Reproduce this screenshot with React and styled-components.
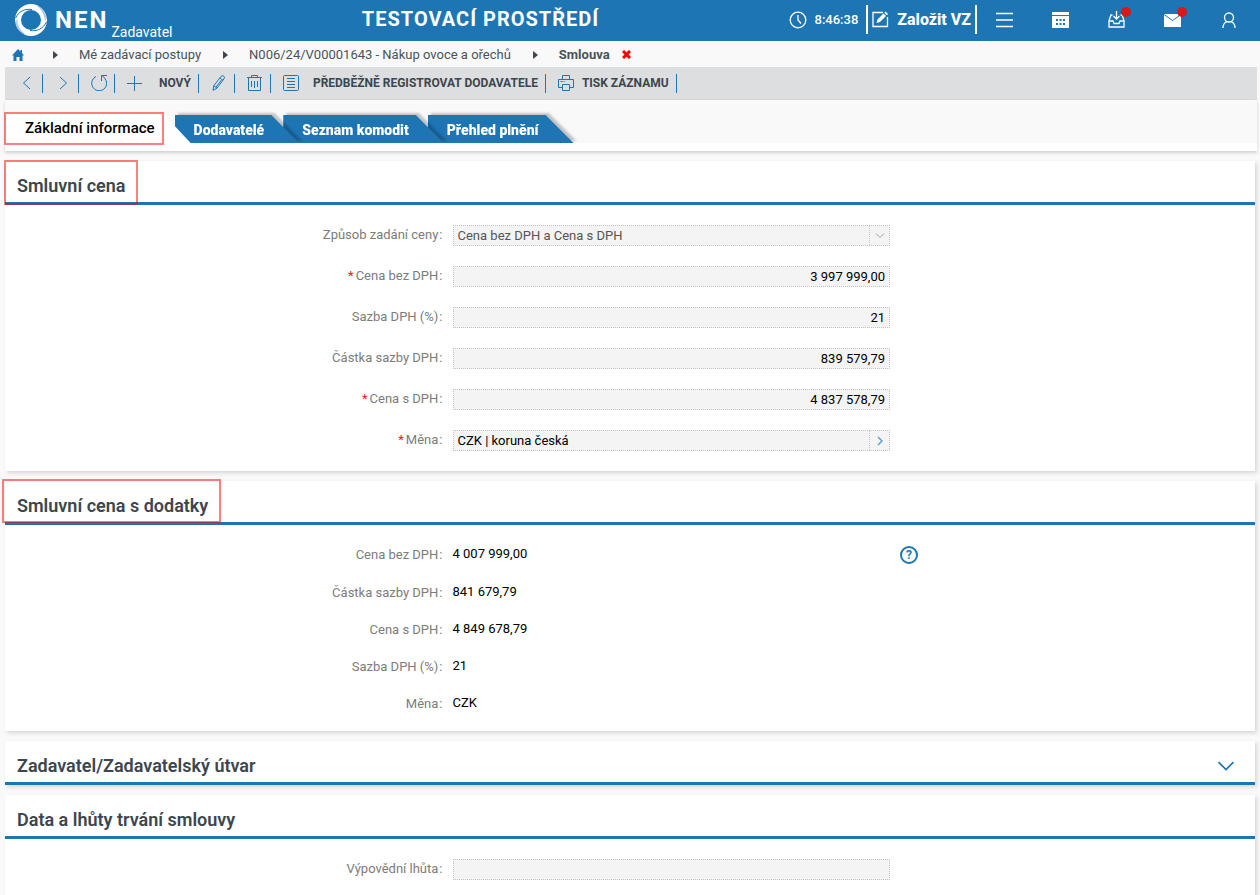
import styled, { createGlobalStyle } from 'styled-components';

const BLUE = '#1d75b4';

const GlobalStyle = createGlobalStyle`
  * {
    box-sizing: border-box;
  }

  body {
    margin: 0;
    background: #f9f9f9;
    color: #3c464e;
    font-family: Roboto, "Liberation Sans", sans-serif;
    font-size: 13px;
    line-height: 16px;
  }

  button, input, select {
    margin: 0;
    padding: 0;
    border: 0;
    border-radius: 0;
    background: none;
    color: inherit;
    font: inherit;
    letter-spacing: inherit;
  }

  button {
    cursor: pointer;
  }

  svg {
    display: block;
    flex: none;
  }
`;

const Page = styled.div`
  display: flex;
  flex-direction: column;
  height: 100vh;
  overflow: hidden;
`;

const Header = styled.header`
  display: flex;
  align-items: center;
  flex: none;
  height: 41px;
  padding: 0 3px 2px 14px;
  background: ${BLUE};
  color: white;
`;

const Logo = styled.a`
  display: flex;
  align-items: center;
  color: inherit;
  text-decoration: none;
`;

const LogoName = styled.span`
  margin-left: 7px;
  font-size: 24px;
  font-weight: 700;
  letter-spacing: 2px;
`;

const LogoRole = styled.span`
  align-self: flex-end;
  margin: 0 0 -3px 3px;
  font-size: 14px;
`;

const EnvTitle = styled.h1`
  flex: 1;
  margin: 0;
  padding-bottom: 2px;
  font-size: 20px;
  font-weight: 700;
  letter-spacing: 1px;
  text-align: center;
`;

const Clock = styled.div`
  display: flex;
  align-items: center;
  gap: 8px;
  margin-right: 8px;
  font-weight: 500;
`;

const CreateButton = styled.button`
  display: flex;
  align-items: center;
  gap: 8px;
  height: 29px;
  padding: 0 4px;
  border: solid white;
  border-width: 0 2px;
  font-size: 16px;
  font-weight: 800;
`;

const HeaderButton = styled.button`
  position: relative;
  display: flex;
  align-items: center;
  justify-content: center;
  width: 56px;
  height: 39px;
`;

const AlertDot = styled.span`
  position: absolute;
  top: 7px;
  left: 32px;
  width: 10px;
  height: 10px;
  border-radius: 50%;
  background: #db1818;
`;

const Breadcrumbs = styled.nav`
  display: flex;
  align-items: center;
  flex: none;
  height: 26px;
  padding: 1px 12px 0;
  color: #4a5359;

  a {
    color: inherit;
    text-decoration: none;
  }

  strong {
    font-weight: 700;
  }
`;

const CrumbArrow = styled.span`
  width: 0;
  height: 0;
  margin: 0 21px 0 22px;
  border: solid transparent;
  border-width: 4px 0 4px 5px;
  border-left-color: #3c464e;
`;

const HomeLink = styled.a`
  margin-right: 7px;
`;

const CloseButton = styled.button`
  margin-left: 12px;
`;

const Toolbar = styled.div`
  display: flex;
  align-items: center;
  flex: none;
  height: 33px;
  margin: 0 3px 0 5px;
  padding-left: 2px;
  border-bottom: 1px solid #d6d8da;
  background: #dddee0;
`;

const ToolButton = styled.button`
  display: flex;
  align-items: center;
  gap: ${(props) => props.$gap || 0}px;
  height: 19px;
  padding: 0 7px 0 12px;
  border-right: 1px solid ${BLUE};
  font-size: 12px;
  font-weight: 700;
  white-space: nowrap;
`;

const TabStrip = styled.div`
  display: flex;
  align-items: flex-end;
  flex: none;
  height: 51px;
  margin: 0 3px 0 5px;
  border-bottom: 8px solid white;
  box-shadow: 0 2px 3px rgba(0, 0, 0, .16);
`;

const Tab = styled.button`
  position: relative;
  z-index: ${(props) => props.$level};
  height: ${(props) => (props.$active ? 30 : 28)}px;
  margin-left: ${(props) => (props.$active ? 0 : -16)}px;
  padding: ${(props) => (props.$active ? '0 36px 0 20px' : '2px 35px 0 19px')};
  color: ${(props) => (props.$active ? 'black' : 'white')};
  font-size: ${(props) => (props.$active ? 15 : 14)}px;
  font-weight: ${(props) => (props.$active ? 500 : 900)};
  filter: ${(props) => (props.$active ? 'none' : 'drop-shadow(3px -2px 1px rgba(0, 0, 0, .22))')};

  &::before {
    content: '';
    position: absolute;
    inset: 0;
    z-index: -1;
    background: ${(props) => (props.$active ? 'white' : BLUE)};
    clip-path: polygon(0 0, calc(100% - 28px) 0, 100% 100%, 0 100%);
  }
`;

const Section = styled.section`
  position: relative;
  flex: none;
  margin: 10px 5px 0;
  background: white;
  box-shadow: 2px 2px 4px rgba(0, 0, 0, .14);
`;

const SectionHeader = styled.header`
  display: flex;
  align-items: center;
  justify-content: space-between;
  height: 44px;
  padding: 8px 21px 0 12px;
  border-bottom: 3px solid ${BLUE};

  h2 {
    margin: 0;
    font-size: 18px;
    font-weight: 600;
    line-height: 22px;
  }
`;

const Fields = styled.div`
  display: grid;
  gap: 20px;
  padding: 20px 0;
`;

const Values = styled.dl`
  margin: 0;
  padding: 11px 0 9px;
`;

const FieldRow = styled.div`
  display: flex;
  align-items: center;
  gap: 10px;
`;

const ValueRow = styled(FieldRow)`
  height: 37px;

  &:first-child {
    height: 38px;
  }
`;

const Label = styled.label`
  width: 35%;
  padding-bottom: 2px;
  color: #7c7c7c;
  text-align: right;
`;

const Term = styled(Label)`
  padding-bottom: 0;
`;

const Colon = styled.span`
  margin-left: 1px;
`;

const Required = styled.span`
  margin-right: 2px;
  color: #e02020;
`;

const Value = styled.dd`
  width: 35%;
  margin: 0;
  padding-bottom: 2px;
  color: black;
`;

const FieldBox = styled.div`
  display: flex;
  width: 35%;
  height: 21px;
  border: 1px dotted #c4c4c4;
  background: #f4f4f4;
  color: ${(props) => (props.$muted ? '#555' : 'black')};

  input, select {
    flex: 1;
    min-width: 0;
    padding: 0 4px;
    appearance: none;
    opacity: 1;
    text-align: ${(props) => (props.$numeric ? 'right' : 'left')};
  }
`;

const FieldAddon = styled.span`
  display: flex;
  align-items: center;
  justify-content: center;
  width: 20px;
  border-left: 1px dotted #c4c4c4;
`;

const HelpButton = styled.button`
  width: 18px;
  height: 18px;
  border: 2px solid ${BLUE};
  border-radius: 50%;
  color: ${BLUE};
  font-size: 12px;
  font-weight: 700;
  line-height: 14px;
`;

const Highlight = styled.span`
  position: absolute;
  z-index: 10;
  top: ${(props) => props.$top}px;
  left: ${(props) => props.$left}px;
  width: ${(props) => props.$width}px;
  height: ${(props) => props.$height}px;
  border: 2px solid rgba(255, 0, 0, .5);
  pointer-events: none;
`;

const Icon = ({ w = 16, h = 16, color = BLUE, stroke = 1, children }) => (
  <svg width={w} height={h} viewBox={`0 0 ${w} ${h}`} fill="none" stroke={color} strokeWidth={stroke} aria-hidden="true">
    {children}
  </svg>
);

const LogoMark = () => (
  <svg width="34" height="34" viewBox="0 0 34 34" aria-hidden="true">
    <circle cx="17" cy="17" r="13" fill="none" stroke="white" strokeWidth="6" />
    <path d="M1.500 15C5 8 11 5.500 18 6.500M32.500 19C29 26 23 28.500 16 27.500" fill="none" stroke={BLUE} strokeWidth="1" />
    <path d="M0 22L3 15.500Q3.500 25 11 31L6 31zM34 12L31 18.500Q30.500 9 23 3L28 3z" fill={BLUE} opacity=".35" />
  </svg>
);

const ChevronLeft = () => <Icon><path d="M11 2L4.500 8l6.500 6" /></Icon>;

const ChevronRight = () => <Icon><path d="M5 2l6.500 6L5 14" /></Icon>;

const Refresh = () => (
  <Icon>
    <path d="M5 1.500A7.500 7.500 0 1 0 13.500 3L11 .500" />
    <path d="M16 .500h-5.500V6" />
  </Icon>
);

const Plus = () => <Icon><path d="M7.500 1v15M0 8.500h15" /></Icon>;

const Pencil = () => (
  <Icon>
    <path d="M2 15.300l.800-4.500L10 1.400q1.300-1.300 2.700-.300q1.300 1.100.300 2.700L6 13.200zM2.800 10.800l3.200 2.400M9 3l3 2.300M10.500 5L5 12" />
  </Icon>
);

const Trash = () => (
  <Icon>
    <path d="M0 2.500h15M4.500 2.500v-2h6v2M1.500 2.500v13h12v-13M4.500 6v6M7.500 6v7M10.500 6v6" />
  </Icon>
);

const List = () => (
  <Icon>
    <rect x=".5" y=".5" width="15" height="15" rx="1" />
    <path d="M4 3.500h8M4 6.500h8M4 9.500h8M4 12.500h8" />
  </Icon>
);

const Printer = () => (
  <Icon>
    <path d="M4.500 4v-3.500h7v3.500M4.500 12.500h-4v-8h15v8h-4M4.500 9.500h7v6h-7zM2.500 6.500h2M5.500 6.500h1" />
  </Icon>
);

const ClockIcon = () => (
  <Icon w={18} h={18} color="white" stroke={1.3}>
    <circle cx="9" cy="9" r="7.800" />
    <path d="M9 4v5l3 3.500" />
  </Icon>
);

const EditIcon = () => (
  <Icon w={17} h={17} color="white" stroke={1.3}>
    <path d="M11 1.500H1v14h14.500V6" />
    <path d="M4.500 12l1-3.500L11.500 2.500l2.500 2.500L8 11z" fill="white" stroke="none" />
    <path d="M12.300 1.700L13.500.500l2.500 2.500l-1.200 1.200z" fill="white" stroke="none" />
  </Icon>
);

const MenuIcon = () => (
  <Icon w={18} h={16} color="white" stroke={1.6}><path d="M0 1.500h17M0 8h17M0 14.500h17" /></Icon>
);

const CalendarIcon = () => (
  <Icon w={18} h={16} color="white">
    <path d="M0 0h17v3H0zM0 4h17v12H0z" fill="white" stroke="none" />
    <path d="M4 8h2M7.500 8h2M11 8h2M4 12h2M7.500 12h2M11 12h2" stroke={BLUE} strokeWidth="2" />
  </Icon>
);

const InboxIcon = () => (
  <Icon w={18} h={17} color="white" stroke={1.3}>
    <path d="M4.500 4H3L1 9.500V16h15V9.500L14 4h-1.500" />
    <path d="M1 10h4l1 2.500h5l1-2.500h4M8.500 0v8M5.500 5l3 3l3-3" />
  </Icon>
);

const MailIcon = () => (
  <Icon w={18} h={14} color="white">
    <path d="M0 1h17v13H0z" fill="white" stroke="none" />
    <path d="M0 1.500l8.500 6l8.500-6" stroke={BLUE} />
  </Icon>
);

const UserIcon = () => (
  <Icon w={14} h={16} color="white" stroke={1.3}>
    <circle cx="7" cy="5.500" r="4.500" />
    <path d="M1 16c0-3.500 1.500-5.500 4-6.500M13 16c0-3.500-1.500-5.500-4-6.500" />
  </Icon>
);

const headerButtons = [
  { name: 'Menu', icon: <MenuIcon /> },
  { name: 'Kalendář', icon: <CalendarIcon /> },
  { name: 'Doručené', icon: <InboxIcon />, alert: true },
  { name: 'Zprávy', icon: <MailIcon />, alert: true },
  { name: 'Uživatel', icon: <UserIcon /> },
];

const tools = [
  { name: 'Předchozí', icon: <ChevronLeft /> },
  { name: 'Další', icon: <ChevronRight /> },
  { name: 'Obnovit', icon: <Refresh /> },
  { icon: <Plus />, text: 'NOVÝ', gap: 16 },
  { name: 'Upravit', icon: <Pencil /> },
  { name: 'Smazat', icon: <Trash /> },
  { icon: <List />, text: 'PŘEDBĚŽNĚ REGISTROVAT DODAVATELE', gap: 14 },
  { icon: <Printer />, text: 'TISK ZÁZNAMU', gap: 8 },
];

const tabs = ['Základní informace', 'Dodavatelé', 'Seznam komodit', 'Přehled plnění'];

const totals = [
  ['Cena bez DPH', '4 007 999,00'],
  ['Částka sazby DPH', '841 679,79'],
  ['Cena s DPH', '4 849 678,79'],
  ['Sazba DPH (%)', '21'],
  ['Měna', 'CZK'],
];

const NumberField = ({ id, label, value, required }) => (
  <FieldRow>
    <Label htmlFor={id}>{required && <Required>*</Required>}{label}<Colon>:</Colon></Label>
    <FieldBox $numeric>
      <input id={id} type="text" value={value} readOnly />
    </FieldBox>
  </FieldRow>
);

export default function App() {
  return <>
    <GlobalStyle />
    <Page>
      <Header>
        <Logo href="#">
          <LogoMark />
          <LogoName>NEN</LogoName>
          <LogoRole>Zadavatel</LogoRole>
        </Logo>
        <EnvTitle>TESTOVACÍ PROSTŘEDÍ</EnvTitle>
        <Clock><ClockIcon />8:46:38</Clock>
        <CreateButton><EditIcon />Založit VZ</CreateButton>
        {headerButtons.map(({ name, icon, alert }) => (
          <HeaderButton key={name} aria-label={name}>
            {icon}
            {alert && <AlertDot />}
          </HeaderButton>
        ))}
      </Header>

      <Breadcrumbs>
        <HomeLink href="#" aria-label="Domů">
          <Icon w={12} h={12}>
            <path d="M6 0l2.500 2.500V1h1.500v3l2 2.500h-1.500V12h-3V8h-3v4h-3V6.500H0z" fill={BLUE} stroke="none" />
          </Icon>
        </HomeLink>
        <CrumbArrow />
        <a href="#">Mé zadávací postupy</a>
        <CrumbArrow />
        <a href="#">N006/24/V00001643 - Nákup ovoce a ořechů</a>
        <CrumbArrow />
        <strong>Smlouva</strong>
        <CloseButton aria-label="Zavřít">
          <Icon w={9} h={9} color="#f00" stroke={3}><path d="M1 1l7 7M8 1L1 8" /></Icon>
        </CloseButton>
      </Breadcrumbs>

      <Toolbar>
        {tools.map(({ name, icon, text, gap }) => (
          <ToolButton key={name || text} aria-label={name} $gap={gap}>{icon}{text}</ToolButton>
        ))}
      </Toolbar>

      <TabStrip>
        {tabs.map((tab, i) => (
          <Tab key={tab} $active={i === 0} $level={tabs.length - i}>
            {tab}
            {i === 0 && <Highlight $top={-1} $left={-1} $width={160} $height={33} />}
          </Tab>
        ))}
      </TabStrip>

      <Section>
        <Highlight $top={-1} $left={-1} $width={134} $height={45} />
        <SectionHeader><h2>Smluvní cena</h2></SectionHeader>
        <Fields>
          <FieldRow>
            <Label htmlFor="price-mode">Způsob zadání ceny<Colon>:</Colon></Label>
            <FieldBox $muted>
              <select id="price-mode" disabled>
                <option>Cena bez DPH a Cena s DPH</option>
              </select>
              <FieldAddon>
                <Icon w={10} h={6} color="#a0a0a0"><path d="M1 .500l4 4l4-4" /></Icon>
              </FieldAddon>
            </FieldBox>
          </FieldRow>
          <NumberField id="price-net" label="Cena bez DPH" value="3 997 999,00" required />
          <NumberField id="vat-rate" label="Sazba DPH (%)" value="21" />
          <NumberField id="vat-amount" label="Částka sazby DPH" value="839 579,79" />
          <NumberField id="price-gross" label="Cena s DPH" value="4 837 578,79" required />
          <FieldRow>
            <Label htmlFor="currency"><Required>*</Required>Měna<Colon>:</Colon></Label>
            <FieldBox>
              <input id="currency" type="text" value="CZK | koruna česká" readOnly />
              <FieldAddon as="button" aria-label="Vybrat měnu">
                <Icon w={6} h={10} color="#5ba0cf" stroke={1.5}><path d="M1 1l4 4l-4 4" /></Icon>
              </FieldAddon>
            </FieldBox>
          </FieldRow>
        </Fields>
      </Section>

      <Section>
        <Highlight $top={-2} $left={-3} $width={219} $height={44} />
        <SectionHeader><h2>Smluvní cena s dodatky</h2></SectionHeader>
        <Values>
          {totals.map(([label, value], i) => (
            <ValueRow key={label}>
              <Term as="dt">{label}<Colon>:</Colon></Term>
              <Value>{value}</Value>
              {i === 0 && <HelpButton aria-label="Nápověda">?</HelpButton>}
            </ValueRow>
          ))}
        </Values>
      </Section>

      <Section>
        <SectionHeader>
          <h2>Zadavatel/Zadavatelský útvar</h2>
          <button aria-label="Rozbalit">
            <Icon w={16} h={10} stroke={1.7}><path d="M.500 1l7.500 7.500L15.500 1" /></Icon>
          </button>
        </SectionHeader>
      </Section>

      <Section>
        <SectionHeader><h2>Data a lhůty trvání smlouvy</h2></SectionHeader>
        <Fields>
          <NumberField id="notice-period" label="Výpovědní lhůta" value="" />
        </Fields>
      </Section>
    </Page>
  </>;
}
